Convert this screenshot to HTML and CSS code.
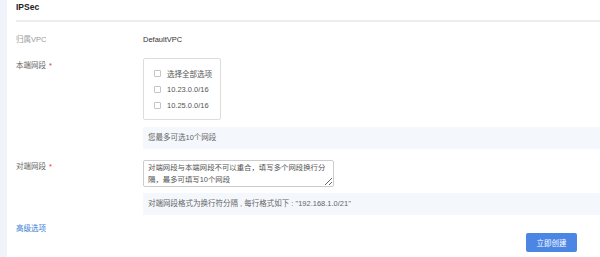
FILE: index.html
```html
<!DOCTYPE html>
<html lang="zh-CN">
<head>
<meta charset="utf-8">
<title>IPSec</title>
<link rel="stylesheet" href="styles.css">
</head>
<body>
<div class="page">
  <div class="card">
    <div class="card-header"><span class="title">IPSec</span></div>
    <div class="row row-vpc">
      <div class="label">归属VPC</div>
      <div class="value">DefaultVPC</div>
    </div>
    <div class="row row-local">
      <div class="label label-top">本端网段<span class="req">*</span></div>
      <div class="field">
        <div class="check-box">
          <label class="check-item"><span class="cb"></span>选择全部选项</label>
          <label class="check-item"><span class="cb"></span>10.23.0.0/16</label>
          <label class="check-item"><span class="cb"></span>10.25.0.0/16</label>
        </div>
      </div>
    </div>
    <div class="hint hint-1">您最多可选10个网段</div>
    <div class="row row-peer">
      <div class="label label-peer">对端网段<span class="req">*</span></div>
      <div class="field">
        <textarea class="ta" readonly>对端网段与本端网段不可以重合，填写多个网段换行分隔，最多可填写10个网段</textarea>
      </div>
    </div>
    <div class="hint hint-2">对端网段格式为换行符分隔 , 每行格式如下 : "192.168.1.0/21"</div>
    <div class="footer">
      <a class="adv" href="#">高级选项</a>
      <button class="btn" type="button">立即创建</button>
    </div>
  </div>
</div>
</body>
</html>
```

FILE: styles.css
```css
html, body {
  margin: 0;
  padding: 0;
  background: #f0f3fa;
  font-family: "Liberation Sans", "Noto Sans CJK SC", sans-serif;
  font-size: 7.5px;
  color: #333;
}
.page {
  padding-left: 7px;
  height: 257px;
  box-sizing: border-box;
}
.card {
  background: #fff;
  height: 257px;
  padding-left: 9px;
  box-sizing: border-box;
}
.card-header {
  height: 20px;
  border-bottom: 2px solid #ececf0;
}
.title {
  display: block;
  line-height: 14px;
  font-size: 8.5px;
  font-weight: bold;
  color: #222;
}
.row {
  display: flex;
}
.label {
  width: 127px;
  flex: none;
  line-height: 12px;
  color: #999;
}
.req {
  color: #e4393c;
  margin-left: 3px;
}
.row-vpc {
  margin-top: 12px;
  line-height: 12px;
}
.value {
  color: #333;
}
.row-local {
  margin-top: 12px;
}
.label-top {
  padding-top: 2px;
  color: #666;
}
.check-box {
  width: 78px;
  box-sizing: border-box;
  border: 1px solid #ddd;
  border-radius: 2px;
  padding: 6px 6px 6px 10px;
  white-space: nowrap;
}
.check-item {
  display: flex;
  align-items: center;
  height: 16px;
  color: #555;
}
.cb {
  flex: none;
  width: 7px;
  height: 7px;
  box-sizing: border-box;
  border: 1px solid #c4c4c4;
  border-radius: 1px;
  margin-right: 6px;
  background: #fff;
}
.hint {
  margin-left: 127px;
  height: 22px;
  line-height: 22px;
  padding-left: 5px;
  background: #f4f8fd;
  color: #666;
}
.hint-1 {
  margin-top: 7px;
}
.row-peer {
  margin-top: 11px;
}
.label-peer {
  padding-top: 1px;
  color: #666;
}
.ta {
  display: block;
  width: 191px;
  height: 27px;
  box-sizing: border-box;
  margin: 0;
  border: 1px solid #ccc;
  border-radius: 2px;
  padding: 1px 4px;
  font-family: "Liberation Sans", "Noto Sans CJK SC", sans-serif;
  font-size: 7.4px;
  line-height: 12px;
  color: #555;
  resize: both;
  overflow: hidden;
  outline: none;
}
.hint-2 {
  margin-top: 6px;
}
.footer {
  display: flex;
  justify-content: space-between;
  align-items: flex-start;
  margin-top: 8px;
  padding-right: 23px;
}
.adv {
  line-height: 12px;
  color: #3b7cd6;
  text-decoration: none;
}
.btn {
  margin-top: 10px;
  width: 51px;
  height: 19px;
  border: none;
  border-radius: 2px;
  background: #4b86e4;
  color: #fff;
  font-family: "Liberation Sans", "Noto Sans CJK SC", sans-serif;
  font-size: 7.5px;
  padding: 0;
}
```
